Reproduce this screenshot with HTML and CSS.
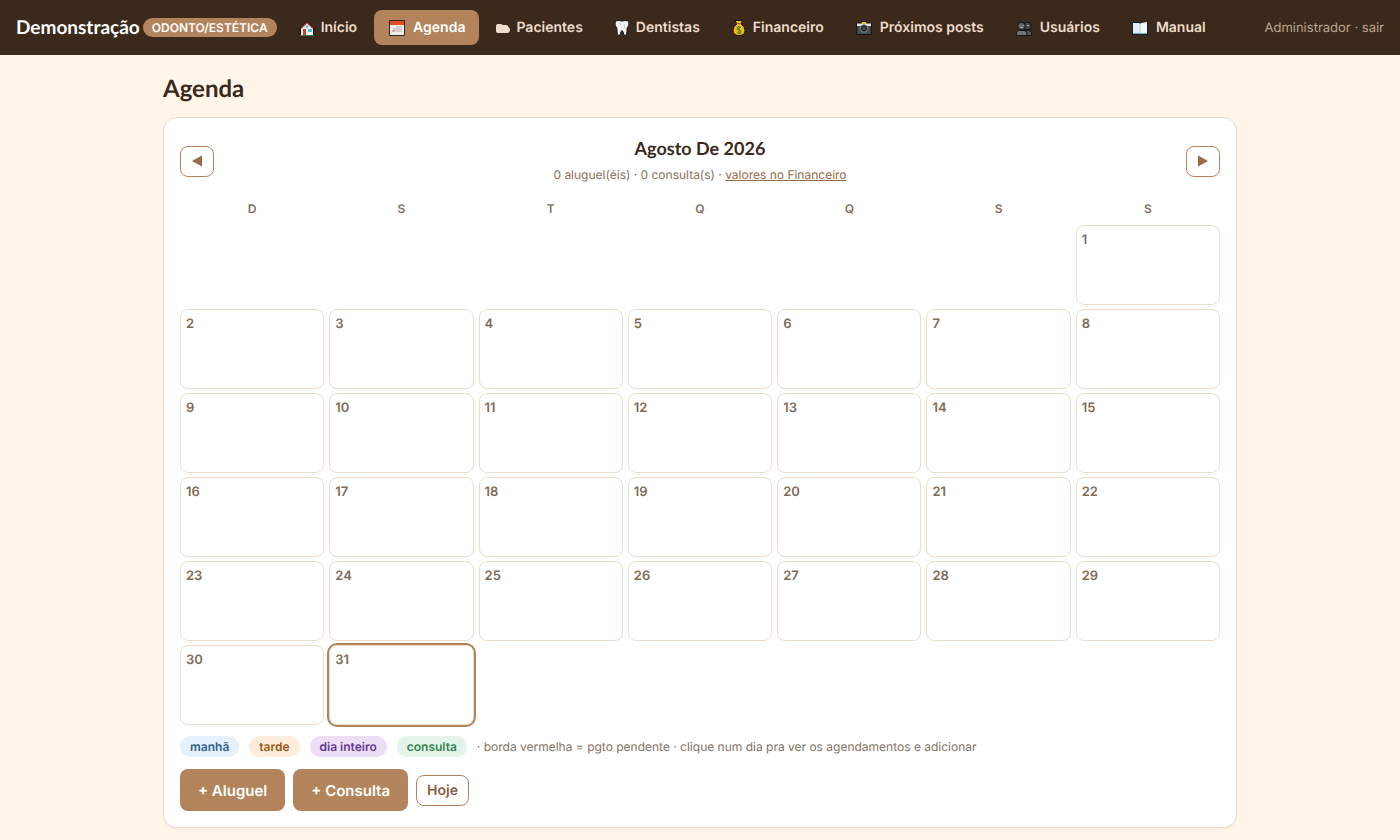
FILE: index.html
```
<!DOCTYPE html>
<html lang="pt-BR">
<head>
  <meta charset="UTF-8">
  <meta name="viewport" content="width=device-width, initial-scale=1.0">
  <title>Agenda</title>
  <link rel="stylesheet" href="styles.css">
</head>
<body>

  <header class="topo">
    <div class="marca">Demonstração <span class="selo">ODONTO/ESTÉTICA</span></div>

    <nav class="menu">
      <a href="#inicio">
        <svg class="icone estreito" viewBox="0 0 16 18" aria-hidden="true">
          <path d="M8 2 0 9.500v1h1V17h14v-6.500h1v-1z" fill="#15110d"/>
          <path d="M2 9h12v7H2z" fill="#f4f1ee"/>
          <path d="m8 3.500 5 5V10H3V8.500z" fill="#e4e9eb"/>
          <path d="m1.500 9.500 6.500-6 6.500 6" fill="none" stroke="#a92c28" stroke-width="1.200"/>
          <path d="M4 10h3v6H4z" fill="#c83f33"/>
          <path d="M9 10h4v3H9zM7 6.500h2v2H7z" fill="#45bfe0"/>
          <path d="M1 16h14v1H1z" fill="#287c4c"/>
        </svg>
        Início
      </a>
      <a href="#agenda" class="ativo" aria-current="page">
        <svg class="icone" viewBox="0 0 19 18" aria-hidden="true">
          <path d="M1.500 1.500h15v15h-15z" fill="#eeedeb" stroke="#33261f"/>
          <path d="M2 2h14v4H2z" fill="#e34b25"/>
          <path d="M8 7h6v2H8zM5 9h9v2H5zM4 11h10v2H4z" fill="#cfcfd0"/>
          <path d="M4 11h3v2H4z" fill="#e9a0a0"/>
        </svg>
        Agenda
      </a>
      <a href="#pacientes">
        <svg class="icone pasta" viewBox="0 0 14 18" aria-hidden="true">
          <path d="M2 5h3l2 1h3q2 0 2.500 2 1.500 1 1.500 3t-2 3H2q-2 0-2-2V7q0-2 2-2z" fill="#efdccb"/>
        </svg>
        Pacientes
      </a>
      <a href="#dentistas">
        <svg class="icone estreito" viewBox="0 0 16 18" aria-hidden="true">
          <path d="M4 1.500C1 1.500.800 4 1.500 6.500c.5 1.500 1.500 2 1.500 4 0 3 .5 6 2 6 2 0 1.500-5 3-5s1 5 3 5c1.500 0 2-3 2-6 0-2 1-2.500 1.500-4C15.200 4 15 1.500 12 1.500c-2 0-2.500.5-4 .5s-2-.5-4-.5z" fill="#f1f0ef" stroke="#17120e"/>
          <path d="M5 4q1 2 3 1M11 5l-1 5" fill="none" stroke="#c9c9ca"/>
        </svg>
        Dentistas
      </a>
      <a href="#financeiro">
        <svg class="icone estreito" viewBox="0 0 16 18" aria-hidden="true">
          <path d="M4 1.500h7.500L10 5q4 2 4 6.500 0 5-6 5t-6-5Q2 7 6 5z" fill="#f3b719" stroke="#17120e"/>
          <path d="M5.500 4.500h5" stroke="#a06a12"/>
          <path d="M10 8.500Q6 7 6 9.500q0 1 2 1.500t2 2q0 2-4 .5M8 7v8" fill="none" stroke="#478c1e" stroke-width="1.200"/>
        </svg>
        Financeiro
      </a>
      <a href="#posts">
        <svg class="icone" viewBox="0 0 19 18" aria-hidden="true">
          <path d="M1.500 4.500h4l1-2h5l1 2h4v11h-15z" fill="#454a4d" stroke="#17120e"/>
          <path d="M2 4.500h14V7H2z" fill="#e4e5e5"/>
          <path d="M7 3h4v2H7z" fill="#f0c330"/>
          <circle cx="9" cy="9.500" r="3.800" fill="#202426" stroke="#8e9496"/>
          <circle cx="9" cy="9.500" r="1.500" fill="#555d60"/>
        </svg>
        Próximos posts
      </a>
      <a href="#usuarios">
        <svg class="icone" viewBox="0 0 19 18" aria-hidden="true">
          <circle cx="12.500" cy="7" r="3.800" fill="#45494b" stroke="#111"/>
          <path d="M8.500 16.500V14q0-2.500 3-2.500h2q3 0 3 2.500v2.500z" fill="#565b5d" stroke="#111"/>
          <circle cx="6.500" cy="7" r="3.800" fill="#5b6062" stroke="#111"/>
          <path d="M1.500 16.500V14q0-2.500 3-2.500h4.500q3 0 3 2.500v2.500z" fill="#707577" stroke="#111"/>
          <path d="M4.500 6.500h1M7.500 6.500h1M5 8.500h3M12 6.500h2" stroke="#a5a9aa"/>
        </svg>
        Usuários
      </a>
      <a href="#manual">
        <svg class="icone" viewBox="0 0 19 18" aria-hidden="true">
          <path d="M1 3h16v13H1z" fill="#17202a"/>
          <path d="M2 4h6l1 1v10H2z" fill="#e2eff9"/>
          <path d="m10 4 6-1v12H9V5z" fill="#f4f7fa"/>
          <path d="M9 5v10" stroke="#b8c8d8"/>
          <path d="M2 14.500h14" stroke="#76add3"/>
        </svg>
        Manual
      </a>
    </nav>

    <div class="usuario">Administrador · <a href="#sair">sair</a></div>
  </header>

  <main class="container">
    <h1>Agenda</h1>

    <section class="card">
      <div class="mes">
        <button class="botao-claro seta" aria-label="Mês anterior">
          <svg viewBox="0 0 12 12" aria-hidden="true"><path d="M11 0.500v11L1 6z"/></svg>
        </button>
        <div class="mes-titulo">
          <h2>Agosto De 2026</h2>
          <p>0 aluguel(éis) · 0 consulta(s) · <a href="#financeiro">valores no Financeiro</a></p>
        </div>
        <button class="botao-claro seta" aria-label="Próximo mês">
          <svg viewBox="0 0 12 12" aria-hidden="true"><path d="M1 0.500v11L11 6z"/></svg>
        </button>
      </div>

      <div class="semana">
        <span>D</span><span>S</span><span>T</span><span>Q</span><span>Q</span><span>S</span><span>S</span>
      </div>

      <!-- Agosto começa no sábado -->
      <div class="dias">
        <button class="dia primeiro">1</button>
        <button class="dia">2</button>
        <button class="dia">3</button>
        <button class="dia">4</button>
        <button class="dia">5</button>
        <button class="dia">6</button>
        <button class="dia">7</button>
        <button class="dia">8</button>
        <button class="dia">9</button>
        <button class="dia">10</button>
        <button class="dia">11</button>
        <button class="dia">12</button>
        <button class="dia">13</button>
        <button class="dia">14</button>
        <button class="dia">15</button>
        <button class="dia">16</button>
        <button class="dia">17</button>
        <button class="dia">18</button>
        <button class="dia">19</button>
        <button class="dia">20</button>
        <button class="dia">21</button>
        <button class="dia">22</button>
        <button class="dia">23</button>
        <button class="dia">24</button>
        <button class="dia">25</button>
        <button class="dia">26</button>
        <button class="dia">27</button>
        <button class="dia">28</button>
        <button class="dia">29</button>
        <button class="dia">30</button>
        <button class="dia hoje">31</button>
      </div>

      <div class="legenda">
        <span class="chip manha">manhã</span>
        <span class="chip tarde">tarde</span>
        <span class="chip inteiro">dia inteiro</span>
        <span class="chip consulta">consulta</span>
        <span>· borda vermelha = pgto pendente · clique num dia pra ver os agendamentos e adicionar</span>
      </div>

      <div class="acoes">
        <button class="botao">+ Aluguel</button>
        <button class="botao">+ Consulta</button>
        <button class="botao-claro">Hoje</button>
      </div>
    </section>
  </main>

</body>
</html>
```
FILE: styles.css
```
* {
  margin: 0;
  padding: 0;
  box-sizing: border-box;
}
body {
  font-family: Inter, 'Liberation Sans', sans-serif;
  background-color: #fff5e8;
  color: #3b291c;
  font-size: 14px;
  text-rendering: geometricPrecision;
}
button {
  font-family: inherit;
  text-rendering: inherit;
  cursor: pointer;
}
.topo {
  display: flex;
  align-items: center;
  min-height: 55px;
  padding: 10px 16px;
  background-color: #3b291c;
}
.marca {
  display: flex;
  align-items: center;
  gap: 3px;
  margin-right: 8px;
  font-family: Lato, sans-serif;
  font-size: 19px;
  font-weight: bold;
  color: #fff;
  white-space: nowrap;
}
.selo {
  padding: 0 9px;
  border-radius: 10px;
  background-color: #b3845b;
  font-family: Inter, sans-serif;
  font-size: 12px;
  font-weight: 600;
  line-height: 19px;
}
.menu {
  display: flex;
  gap: 3px;
}
.menu a {
  display: flex;
  align-items: center;
  gap: 6px;
  height: 35px;
  padding: 0 14px;
  border-radius: 8px;
  color: #efdccb;
  font-weight: 600;
  text-decoration: none;
  white-space: nowrap;
}
.menu .ativo {
  background-color: #b3845b;
  color: #fff;
}
.icone {
  flex: none;
  width: 19px;
  height: 18px;
}
.estreito {
  width: 16px;
}
.pasta {
  width: 14px;
}
.usuario {
  margin-left: auto;
  font-size: 13px;
  color: #bda58e;
  white-space: nowrap;
}
.usuario a {
  color: inherit;
  text-decoration: none;
}
.container {
  max-width: 1106px;
  margin: 0 auto;
  padding: 19px 16px 12px;
}
h1, h2 {
  font-family: Lato, sans-serif;
  font-weight: bold;
}
h1 {
  margin-bottom: 13px;
  font-size: 24px;
  line-height: 30px;
}
.card {
  padding: 16px;
  border: 1px solid #eadfce;
  border-radius: 14px;
  background-color: #fff;
  box-shadow: 0 1px 3px rgba(59, 41, 28, 0.06);
}
.mes {
  display: flex;
  align-items: center;
  justify-content: space-between;
}
.mes-titulo {
  text-align: center;
}
h2 {
  font-size: 18px;
  line-height: 28px;
}
.mes-titulo p {
  font-size: 12px;
  line-height: 26px;
  color: #85735f;
}
.mes-titulo a {
  color: #976b48;
}
.botao-claro {
  height: 31px;
  padding: 0 10px;
  border: 1px solid #b3845b;
  border-radius: 8px;
  background-color: #fff;
  color: #87603f;
  font-size: 14px;
  font-weight: 600;
}
.seta {
  display: flex;
  align-items: center;
  justify-content: center;
  width: 34px;
}
.seta svg {
  flex: none;
  width: 12px;
  height: 12px;
  fill: #976b48;
}
.semana, .dias {
  display: grid;
  grid-template-columns: repeat(7, 1fr);
  gap: 4px 5px;
}
.semana {
  padding: 11px 0 6px;
  text-align: center;
  font-size: 12px;
  font-weight: 600;
  line-height: 20px;
  color: #85735f;
}
.dia {
  display: flex;
  height: 80px;
  padding: 5px;
  border: 1px solid #eadfce;
  border-radius: 8px;
  background-color: #fff;
  color: #7e6b58;
  font-size: 13px;
  font-weight: 600;
  line-height: 18px;
}
.primeiro {
  grid-column: 7;
}
.hoje {
  outline: 2px solid #b3845b;
}
.legenda {
  display: flex;
  flex-wrap: wrap;
  align-items: center;
  gap: 10px;
  margin-top: 11px;
  font-size: 12px;
  line-height: 21px;
  color: #85735f;
}
.chip {
  padding: 0 10px;
  border-radius: 11px;
  font-weight: 600;
}
.manha {
  background-color: #e5f1fc;
  color: #2d5f8b;
}
.tarde {
  background-color: #ffeddb;
  color: #9b5b18;
}
.inteiro {
  background-color: #ecdff5;
  color: #653991;
}
.consulta {
  background-color: #e4f4e9;
  color: #378450;
}
.acoes {
  display: flex;
  align-items: center;
  gap: 8px;
  margin-top: 12px;
}
.botao {
  height: 42px;
  padding: 0 18px;
  border: none;
  border-radius: 8px;
  background-color: #b3845b;
  color: #fff;
  font-size: 15px;
  font-weight: 600;
}
```
